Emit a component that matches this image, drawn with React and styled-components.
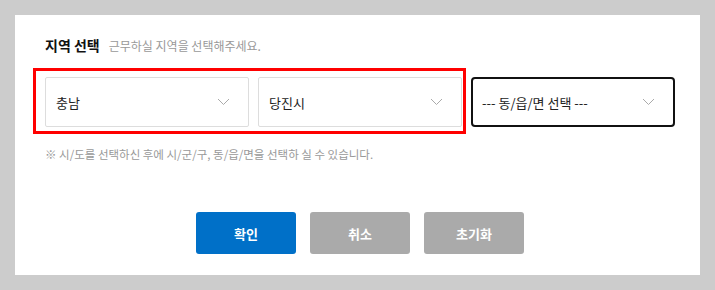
import React, { useState } from 'react';
import styled, { createGlobalStyle } from 'styled-components';

const GlobalStyle = createGlobalStyle`
  html, body {
    margin: 0;
    padding: 0;
    background: #cccccc;
    font-family: "Noto Sans CJK KR", "Noto Sans", sans-serif;
  }
`;

const Page = styled.div`
  padding: 15px;
  width: 715px;
  height: 290px;
  box-sizing: border-box;
`;

const Panel = styled.div`
  background: #fff;
  width: 685px;
  height: 260px;
  box-sizing: border-box;
  padding: 20px 0 0 30px;
  display: flex;
  flex-direction: column;
`;

const Header = styled.div`
  display: flex;
  align-items: baseline;
  gap: 9px;
  height: 22px;
`;

const Title = styled.h2`
  margin: 0;
  font-size: 14px;
  font-weight: 700;
  color: #111;
`;

const SubTitle = styled.span`
  font-size: 12px;
  color: #999;
`;

const Row = styled.div`
  display: flex;
  align-items: flex-start;
  gap: 5px;
  margin-top: 11px;
  margin-left: -12px;
`;

const Highlight = styled.div`
  display: flex;
  gap: 9px;
  border: 3px solid #ff0000;
  padding: 6px 1px 4px 9px;
`;

const SelectBox = styled.div`
  width: ${(p) => p.$width}px;
  height: 50px;
  box-sizing: border-box;
  margin-top: ${(p) => (p.$active ? '9px' : '0')};
  border: ${(p) => (p.$active ? '2px solid #111' : '1px solid #dddddd')};
  border-radius: ${(p) => (p.$active ? '4px' : '2px')};
  display: flex;
  align-items: center;
  justify-content: space-between;
  padding: 0 18px 0 ${(p) => (p.$active ? '9px' : '10px')};
  font-size: 13px;
  color: #222;
  background: #fff;
  cursor: pointer;
`;

const Chevron = () => (
  <svg width="13" height="8" viewBox="0 0 13 8">
    <path d="M1 1l5.5 5.5L12 1" fill="none" stroke="#aaa" strokeWidth="1" />
  </svg>
);

const Note = styled.p`
  margin: 12px 0 0 0;
  font-size: 11.5px;
  color: #999;
`;

const Buttons = styled.div`
  display: flex;
  gap: 14px;
  margin-top: 50px;
  margin-left: 151px;
`;

const Button = styled.button`
  width: 100px;
  height: 42px;
  border: none;
  border-radius: 3px;
  background: ${(p) => (p.$primary ? '#0070c8' : '#aaaaaa')};
  color: #fff;
  font-family: inherit;
  font-size: 13px;
  font-weight: 700;
  cursor: pointer;
`;

const Select = ({ value, width, active }) => (
  <SelectBox $width={width} $active={active}>
    <span>{value}</span>
    <Chevron />
  </SelectBox>
);

export default function App() {
  const [sido] = useState('충남');
  const [sigungu] = useState('당진시');

  return (
    <>
      <GlobalStyle />
      <Page>
        <Panel>
          <Header>
            <Title>지역 선택</Title>
            <SubTitle>근무하실 지역을 선택해주세요.</SubTitle>
          </Header>
          <Row>
            <Highlight>
              <Select value={sido} width={204} />
              <Select value={sigungu} width={204} />
            </Highlight>
            <Select value="--- 동/읍/면 선택 ---" width={204} active />
          </Row>
          <Note>※ 시/도를 선택하신 후에 시/군/구, 동/읍/면을 선택하 실 수 있습니다.</Note>
          <Buttons>
            <Button $primary>확인</Button>
            <Button>취소</Button>
            <Button>초기화</Button>
          </Buttons>
        </Panel>
      </Page>
    </>
  );
}
